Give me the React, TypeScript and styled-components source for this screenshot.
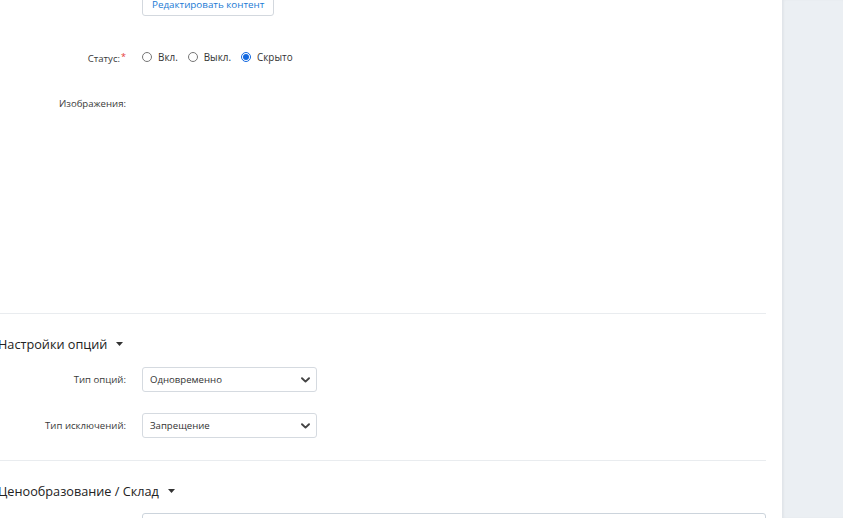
import React from 'react'
import styled, { createGlobalStyle } from 'styled-components'

//-----------------------------------------------------------------------------
// Global
//-----------------------------------------------------------------------------
const GlobalStyle = createGlobalStyle`
  html, body {
    margin: 0;
    padding: 0;
    background: #ffffff;
    overflow: hidden;
  }
  body {
    font-family: "Open Sans", "Noto Sans", sans-serif;
    color: #333;
  }
`

//-----------------------------------------------------------------------------
// Parts
//-----------------------------------------------------------------------------
const Chevron = () => (
  <svg width="9" height="6" viewBox="0 0 9 6">
    <path d="M1 1.2 L4.5 4.6 L8 1.2" fill="none" stroke="#444" strokeWidth="1.9" strokeLinecap="round" strokeLinejoin="round" />
  </svg>
)

const Caret = () => (
  <svg width="7" height="4" viewBox="0 0 7 4">
    <path d="M0 0 L7 0 L3.5 4 Z" fill="#333" />
  </svg>
)

const Select = ({ value }: { value: string }) => (
  <SelectBox>
    <span>{value}</span>
    <Chevron />
  </SelectBox>
)

//-----------------------------------------------------------------------------
// Component
//-----------------------------------------------------------------------------
export default function App() {
  const statuses = [
    { label: 'Вкл.', checked: false },
    { label: 'Выкл.', checked: false },
    { label: 'Скрыто', checked: true }
  ]

  return (
    <>
      <GlobalStyle />
      <Page>
        <Main>
          <Row height={22} offset={-6}>
            <Label />
            <Control>
              <GhostButton>Редактировать контент</GhostButton>
            </Control>
          </Row>

          <Row height={24} offset={29}>
            <Label>
              Статус:<Required>*</Required>
            </Label>
            <Control>
              <RadioGroup>
                {statuses.map(s => (
                  <RadioLabel key={s.label}>
                    <Radio type="radio" name="status" defaultChecked={s.checked} />
                    {s.label}
                  </RadioLabel>
                ))}
              </RadioGroup>
            </Control>
          </Row>

          <Row height={216} offset={28} align="start">
            <Label>Изображения:</Label>
            <Control />
          </Row>

          <Divider />

          <SectionTitle>
            Настройки опций <Caret />
          </SectionTitle>

          <Row height={25} offset={14}>
            <Label>Тип опций:</Label>
            <Control>
              <Select value="Одновременно" />
            </Control>
          </Row>

          <Row height={25} offset={21}>
            <Label>Тип исключений:</Label>
            <Control>
              <Select value="Запрещение" />
            </Control>
          </Row>

          <Divider spaced />

          <SectionTitle>
            Ценообразование / Склад <Caret />
          </SectionTitle>

          <Row height={26} offset={13}>
            <Label />
            <Control>
              <Input />
            </Control>
          </Row>
        </Main>
        <Sidebar />
      </Page>
    </>
  )
}

//-----------------------------------------------------------------------------
// Styled Components
//-----------------------------------------------------------------------------
const Page = styled.div`
  display: flex;
  width: 100%;
  height: 518px;
  overflow: hidden;
`

const Main = styled.div`
  width: 766px;
  margin-right: 16px;
  display: flex;
  flex-direction: column;
  flex-shrink: 0;
`

const Sidebar = styled.div`
  flex: 1;
  background: #ebeff3;
  border-left: 1px solid #e1e5ea;
  box-shadow: inset 1px 0 2px rgba(0, 0, 0, 0.04);
`

const Row = styled.div<{ height: number; offset: number; align?: string }>`
  display: grid;
  grid-template-columns: 126px 1fr;
  column-gap: 16px;
  align-items: ${p => p.align || 'center'};
  height: ${p => p.height}px;
  margin-top: ${p => p.offset}px;
  flex-shrink: 0;
`

const Label = styled.div`
  text-align: right;
  font-size: 9.6px;
  color: #3a3a3a;
`

const Required = styled.span`
  color: #e53935;
  margin-left: 1px;
  font-size: 9px;
  vertical-align: 2px;
`

const Control = styled.div`
  display: flex;
  align-items: center;
  min-width: 0;
`

const GhostButton = styled.button`
  height: 22px;
  padding: 0 9px;
  border: 1px solid #d3d8de;
  border-radius: 3px;
  background: #fff;
  color: #1a7ad4;
  font-family: "Open Sans", "Noto Sans", sans-serif;
  font-size: 9.8px;
  line-height: 20px;
`

const RadioGroup = styled.div`
  display: flex;
  align-items: center;
  gap: 10px;
`

const RadioLabel = styled.label`
  display: flex;
  align-items: center;
  gap: 6px;
  font-size: 9.9px;
  color: #333;
`

const Radio = styled.input`
  margin: 0;
  width: 10px;
  height: 10px;
  accent-color: #1168e0;
`

const Divider = styled.div<{ spaced?: boolean }>`
  height: 1px;
  background: #e9ecef;
  flex-shrink: 0;
  margin-top: ${p => (p.spaced ? 22 : 0)}px;
`

const SectionTitle = styled.div`
  display: flex;
  align-items: center;
  gap: 9px;
  margin-left: -2px;
  margin-top: 21px;
  height: 18px;
  font-size: 12.7px;
  color: #222;
  flex-shrink: 0;
`

const SelectBox = styled.div`
  width: 175px;
  height: 25px;
  box-sizing: border-box;
  border: 1px solid #d5dae0;
  border-radius: 3px;
  display: flex;
  align-items: center;
  justify-content: space-between;
  padding: 0 6px 0 7px;
  font-size: 9.6px;
  color: #333;
`

const Input = styled.div`
  width: 100%;
  height: 26px;
  box-sizing: border-box;
  border: 1px solid #ccd4dc;
  border-radius: 3px;
`
